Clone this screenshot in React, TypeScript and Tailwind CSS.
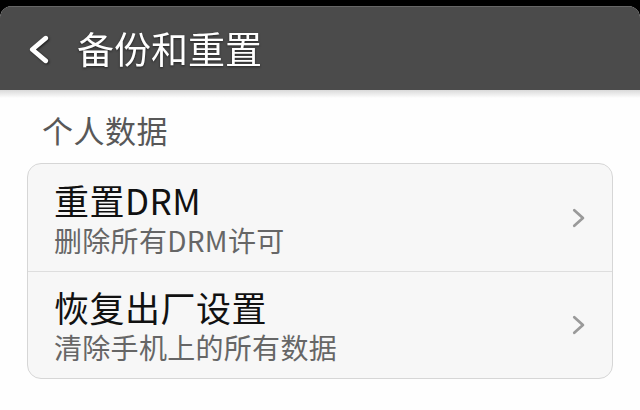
import React from 'react';

const font = { fontFamily: '"Noto Sans CJK SC", "Noto Sans", sans-serif' };

const Chevron: React.FC<{ dir: 'left' | 'right'; className?: string }> = ({ dir, className }) => (
  <svg className={className} viewBox="0 0 20 28" fill="none" stroke="currentColor" strokeWidth={dir === 'left' ? 4.5 : 3.5} strokeLinecap="round" strokeLinejoin="round">
    {dir === 'left' ? <path d="M17 3 L4 14 L17 25" /> : <path d="M4 4 L15 14 L4 24" />}
  </svg>
);

const rows = [
  { title: '重置DRM', sub: '删除所有DRM许可' },
  { title: '恢复出厂设置', sub: '清除手机上的所有数据' },
];

const App: React.FC = () => {
  return (
    <div className="w-[640px] h-[410px] bg-black overflow-hidden" style={font}>
      <div className="mt-[6px] h-[404px] bg-[#fefefe] rounded-t-[12px] overflow-hidden">
        {/* Action bar */}
        <div className="h-[84px] bg-[#4b4b4b] border-t border-[#666] flex items-center">
          <Chevron dir="left" className="ml-[28px] mt-[2px] w-[21px] h-[29px] text-white drop-shadow-[1px_1px_1px_rgba(0,0,0,0.6)]" />
          <span className="ml-[28px] text-[37px] leading-none text-white drop-shadow-[0_1px_1px_rgba(0,0,0,0.5)]">备份和重置</span>
        </div>
        <div className="h-[8px] bg-gradient-to-b from-[#d9d9d9] to-[#fefefe]" />

        <div className="mt-[12px] ml-[42px] text-[31px] leading-[40px] tracking-[0.5px] text-[#585858]">个人数据</div>

        <div className="mt-[13px] mx-[27px] rounded-[14px] border border-[#d6d6d6] bg-[#f7f7f7] overflow-hidden">
          {rows.map((r, i) => (
            <div key={r.title} className={`h-[107px] flex items-center pl-[26px] pr-[25px] ${i > 0 ? 'border-t border-[#dedede]' : ''}`}>
              <div className="flex-1 flex flex-col">
                <span className="text-[35px] leading-[40px] tracking-[0.5px] text-[#111]">{r.title}</span>
                <span className="mt-[4px] text-[28px] leading-[32px] tracking-[0.3px] text-[#666]">{r.sub}</span>
              </div>
              <Chevron dir="right" className="w-[16px] h-[22px] text-[#9a9a9a]" />
            </div>
          ))}
        </div>
      </div>
    </div>
  );
};

export default App;
